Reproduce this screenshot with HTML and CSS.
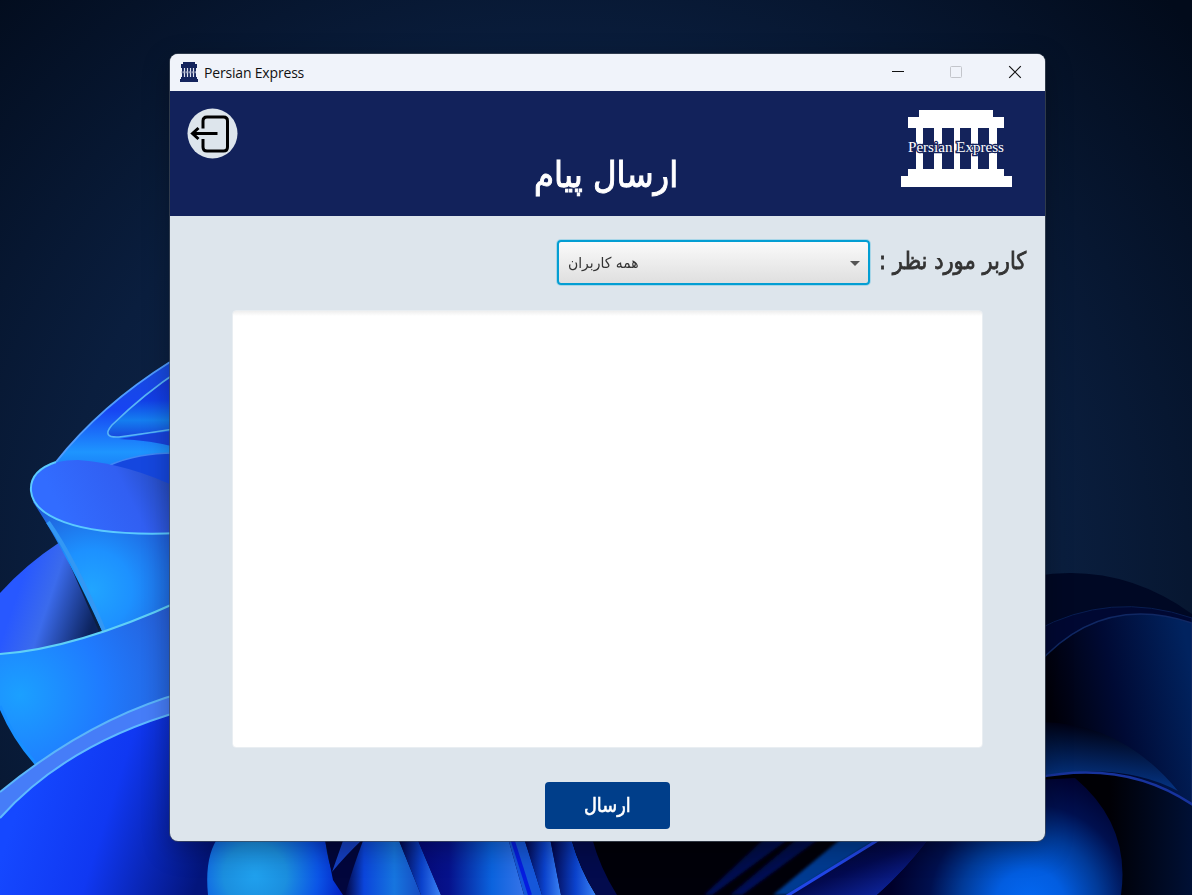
FILE: index.html
```
<!DOCTYPE html>
<html lang="fa">
<head>
<meta charset="utf-8">
<title>Persian Express</title>
<link rel="stylesheet" href="styles.css">
</head>
<body class="desktop">
<svg class="wallpaper" viewBox="0 0 1192 895" aria-hidden="true">
  <defs>
    <filter id="soft" x="-20%" y="-20%" width="140%" height="140%"><feGaussianBlur stdDeviation="1.5"/></filter>
    <radialGradient id="sky" gradientUnits="userSpaceOnUse" cx="560" cy="580" r="840"><stop offset="0" stop-color="#15305a"/><stop offset=".6" stop-color="#0a1e3e"/><stop offset="1" stop-color="#020b1b"/></radialGradient>
    <linearGradient id="top" x1="0" y1="0" x2="0" y2="1"><stop offset="0" stop-color="#174bdc"/><stop offset=".3" stop-color="#1744f2"/><stop offset=".57" stop-color="#1e95ff"/><stop offset=".8" stop-color="#1462ed"/></linearGradient>
    <linearGradient id="inner" x1="0" y1="0" x2="0" y2="1"><stop offset="0" stop-color="#1534d2"/><stop offset=".45" stop-color="#123fe8"/><stop offset=".75" stop-color="#147ef0"/><stop offset="1" stop-color="#1748dd"/></linearGradient>
    <linearGradient id="disc" x1=".2" y1=".7" x2="1" y2=".5"><stop offset="0" stop-color="#326cff"/><stop offset=".6" stop-color="#315ff2"/><stop offset="1" stop-color="#264abd"/></linearGradient>
    <radialGradient id="cone" gradientUnits="userSpaceOnUse" cx="92" cy="590" r="100"><stop offset="0" stop-color="#21a5ff"/><stop offset=".4" stop-color="#1d91ff"/><stop offset="1" stop-color="#2058d5"/></radialGradient>
    <linearGradient id="petal" gradientUnits="userSpaceOnUse" x1="15" y1="600" x2="92" y2="626"><stop offset="0" stop-color="#2858ff"/><stop offset=".4" stop-color="#3b6bec"/><stop offset="1" stop-color="#0c235d"/></linearGradient>
    <radialGradient id="ribbon" gradientUnits="userSpaceOnUse" cx="20" cy="695" r="185"><stop offset="0" stop-color="#1ba0ff"/><stop offset=".45" stop-color="#1f7bff"/><stop offset="1" stop-color="#2859cf"/></radialGradient>
    <linearGradient id="bowl" gradientUnits="userSpaceOnUse" x1="20" y1="800" x2="205" y2="860"><stop offset="0" stop-color="#1548ff"/><stop offset=".45" stop-color="#1038f2"/><stop offset="1" stop-color="#03157c"/></linearGradient>
    <radialGradient id="drop" gradientUnits="userSpaceOnUse" cx="255" cy="875" r="90"><stop offset="0" stop-color="#20a1ee"/><stop offset=".35" stop-color="#1b8fdf"/><stop offset=".7" stop-color="#0b55e7"/><stop offset="1" stop-color="#0321c4"/></radialGradient>
    <linearGradient id="fold"><stop offset="0" stop-color="#020641"/><stop offset=".25" stop-color="#0b45db"/><stop offset=".65" stop-color="#1675df"/><stop offset="1" stop-color="#164cc3"/></linearGradient>
    <linearGradient id="fold2"><stop offset="0" stop-color="#050878"/><stop offset=".3" stop-color="#06128c"/><stop offset=".7" stop-color="#0b63de"/><stop offset="1" stop-color="#3673e8"/></linearGradient>
    <linearGradient id="strip"><stop offset="0" stop-color="#020345"/><stop offset=".55" stop-color="#0b42cc"/><stop offset="1" stop-color="#3b83f5"/></linearGradient>
    <linearGradient id="dark" gradientUnits="userSpaceOnUse" x1="1050" y1="700" x2="1192" y2="670"><stop offset="0" stop-color="#00010a"/><stop offset=".45" stop-color="#000a34"/><stop offset="1" stop-color="#01235f"/></linearGradient>
    <linearGradient id="arch" gradientUnits="userSpaceOnUse" x1="1060" y1="722" x2="1055" y2="775"><stop offset="0" stop-color="#000112"/><stop offset="1" stop-color="#04307b"/></linearGradient>
    <linearGradient id="hollow" gradientUnits="userSpaceOnUse" x1="1110" y1="0" x2="1192" y2="0"><stop offset="0" stop-color="#000005"/><stop offset="1" stop-color="#001035"/></linearGradient>
    <radialGradient id="glow" gradientUnits="userSpaceOnUse" cx="1030" cy="905" r="140"><stop offset="0" stop-color="#0369f4"/><stop offset=".25" stop-color="#025de0"/><stop offset=".5" stop-color="#013a98"/><stop offset=".72" stop-color="#00104f"/><stop offset="1" stop-color="#00002a"/></radialGradient>
    <linearGradient id="ray" x1="0" y1="0" x2="1" y2="1"><stop offset="0" stop-color="#010318"/><stop offset=".5" stop-color="#030a50"/><stop offset="1" stop-color="#1230c0"/></linearGradient>
  </defs>
  <rect width="1192" height="895" fill="url(#sky)"/>
  <path d="M56 462Q100 406 170 362H230V520H56Z" fill="url(#top)"/>
  <path d="M56 462Q100 406 170 362" fill="none" stroke="#4f9cff" stroke-width="2"/>
  <path d="M180 370Q145 393 112 425Q101 438 119 437Q150 433 180 428Z" fill="url(#inner)"/>
  <path d="M180 370Q145 393 112 425Q101 438 119 437Q150 433 180 428" fill="none" stroke="#58b5f6" stroke-width="1.6"/>
  <path d="M119 439Q150 433 180 430V448Q150 440 119 439Z" fill="#1742dc"/>
  <path d="M110 465Q140 452 180 453V490Z" fill="#1547df"/>
  <path d="M110 465Q140 452 180 453" fill="none" stroke="#3f88f5" stroke-width="1.6"/>
  <path d="M60 542Q25 565 0 593V680H120Z" fill="url(#petal)"/>
  <path d="M33 502Q65 550 103 633H180V520Z" fill="url(#cone)"/>
  <path d="M48 522Q75 560 105 633" fill="none" stroke="#3398f4" stroke-width="4"/>
  <path d="M180 489Q130 464 78 460C46 460 30 474 31 491C33 513 68 538 180 533Z" fill="url(#disc)"/>
  <path d="M56 462C38 468 30 478 31 491C33 513 68 538 180 533" fill="none" stroke="#5bcaff" stroke-width="2"/>
  <path d="M0 654Q75 649 180 601V780L37 765Q13 738 0 706Z" fill="url(#ribbon)"/>
  <path d="M0 654Q75 649 180 601" fill="none" stroke="#5fd0f7" stroke-width="2"/>
  <path d="M0 706Q13 738 37 765" fill="none" stroke="#188fff" stroke-width="3"/>
  <path d="M0 792Q90 718 185 692V895H0Z" fill="#467df8"/>
  <path d="M0 792Q90 718 185 692" fill="none" stroke="#5bb6fa" stroke-width="2"/>
  <path d="M0 818Q67 743 185 710L250 835V895H0Z" fill="url(#bowl)"/>
  <path d="M0 818Q67 743 185 710" fill="none" stroke="#5fbaff" stroke-width="2"/>
  <path d="M220 835Q204 855 208 895H344Q327 870 325 835Z" fill="url(#drop)"/>
  <path d="M324 835L333 880L343 895H570L560 835Z" fill="#02063d"/>
  <path d="M345 835L332 872Q345 856 364 838Z" fill="#153fc1"/>
  <path d="M364 838Q352 870 345 895H421L398 838Z" fill="url(#fold)"/>
  <path d="M398 838L421 895H441L417 838Z" fill="url(#strip)"/>
  <path d="M417 838L441 895H524L508 838Z" fill="url(#fold2)"/>
  <path d="M508 838L524 895H542L524 838Z" fill="#1557da"/>
  <path d="M512 838L530 895" stroke="#061de0" stroke-width="4"/>
  <path d="M524 838L542 895H561L550 838Z" fill="url(#strip)"/>
  <path d="M550 838L561 895H596Q580 870 571 838Z" fill="url(#strip)"/>
  <path d="M571 838Q580 870 596 895H1192V760H1045V838Z" fill="#000009"/>
  <path d="M571 838Q580 870 596 895H617Q600 868 592 838Z" fill="#030b4d"/>
  <g filter="url(#soft)">
    <path d="M765 838L704 895H712L790 838Z" fill="url(#ray)"/>
    <path d="M798 838L730 895H742L820 838Z" fill="url(#ray)"/>
    <path d="M842 838L773 895H789L880 838Z" fill="#063b91"/>
  </g>
  <path d="M878 840L789 895H877Q900 876 930 838Z" fill="url(#ray)"/>
  <path d="M878 840L782 899" stroke="#2146e7" stroke-width="3"/>
  <path d="M1035 576Q1120 562 1192 614V895H1035Z" fill="#000824"/>
  <path d="M1035 631Q1110 590 1192 618V895H1035Z" fill="#000832" stroke="#081d50" stroke-width="1"/>
  <path d="M1035 667Q1100 592 1192 623V895H1035Z" fill="url(#dark)" stroke="#102863" stroke-width="1.5"/>
  <path d="M1035 722Q1120 720 1178 791Q1120 760 1035 778Z" fill="url(#arch)"/>
  <path d="M1035 778Q1130 758 1200 810V900H1035Z" fill="url(#hollow)"/>
  <path d="M1035 778Q1130 758 1200 810" fill="none" stroke="#17339d" stroke-width="2.5"/>
  <path d="M930 838Q905 870 877 895H1121Q1131 825 1075 778L1035 780V838Z" fill="url(#glow)"/>
</svg>

<main class="window">
  <div class="titlebar">
    <svg class="app-icon" viewBox="0 0 18 20"><path fill="#14245d" d="M3 0h12v2h2v4h-1v9h1v2h1v3H0v-3h1v-2h1V6H1V2h2z"/><path d="M4.500 6v9M7.500 6v9M10.500 6v9M13.500 6v9" stroke="#dfe3ef" stroke-width="1.2"/><path d="M1.500 10.300h15" stroke="#9098b5" stroke-width="2" stroke-dasharray="1 .5"/></svg>
    <span class="window-title">Persian Express</span>
    <div class="controls">
      <svg viewBox="0 0 14 14"><path d="M1 6.500h12" stroke="#111"/></svg>
      <svg viewBox="0 0 14 14"><rect x="1.500" y="1.500" width="11" height="11" rx="1" fill="none" stroke="#c3c5cb"/></svg>
      <svg viewBox="0 0 14 14"><path d="M1.200 1.200l11.600 11.600M12.800 1.200L1.200 12.800" stroke="#111" stroke-width="1.2"/></svg>
    </div>
  </div>
  <header class="header">
    <button class="exit" aria-label="خروج"><svg viewBox="0 0 51 51"><circle cx="25.500" cy="24.500" r="25" fill="#dde5ec"/><path d="M16 19.500v-7.500q0-4 4-4h16.500q4 0 4 4v26q0 4-4 4h-16.500q-4 0-4-4v-8M30.500 24.500H5.500M11.500 19l-6 5.500 6 5.500" fill="none" stroke="#000" stroke-width="3"/></svg></button>
    <h1 class="heading"><span>ارسال پیام</span></h1>
    <svg class="logo" viewBox="0 0 111 77"><path fill="#fff" d="M18 0h74v7h11v11h-7v41h7v7h8v11H0V66h7v-7h8V18H7V7h11z"/><path fill="#14235b" d="M22 18h11v41H22zM41 18h12v41H41zM59 18h11v41H59zM77 18h11v41H77z"/><text class="logo-text" x="7" y="42" textLength="96" lengthAdjust="spacingAndGlyphs">Persian Express</text></svg>
  </header>
  <section class="form">
    <div class="user-row" dir="rtl">
      <span class="label"><span>کاربر مورد نظر :</span></span>
      <div class="select" dir="ltr"><span class="value">همه کاربران</span><span class="arrow"></span></div>
    </div>
    <div class="message"></div>
    <button class="send"><span>ارسال</span></button>
  </section>
</main>
</body>
</html>
```
FILE: styles.css
```
* { box-sizing: border-box; }
.desktop { margin: 0; width: 1192px; height: 895px; overflow: hidden; padding: 54px 0 0 170px; background: #07162e; font-family: "DejaVu Sans", sans-serif; }
.wallpaper { position: absolute; inset: 0; width: 1192px; height: 895px; z-index: -1; }
.window { width: 875px; height: 787px; border-radius: 8px; overflow: hidden; background: #dde5ec; box-shadow: 0 0 0 1px rgba(65, 75, 90, .7), 0 8px 28px rgba(0, 0, 0, .3); }
.titlebar { height: 37px; display: flex; align-items: center; background: #f0f3fa; padding: 0 23px 1px 10px; }
.app-icon { width: 18px; height: 20px; }
.window-title { margin-left: 6px; font: 14px/20px "Open Sans", sans-serif; letter-spacing: -.18px; color: #111; padding-top: 1px; }
.controls { margin-left: auto; display: flex; gap: 45px; }
.controls svg { width: 14px; height: 14px; }
.controls svg:first-child { margin-right: -1px; }
.header { height: 125px; background: #12225b; display: grid; grid-template-columns: 51px 1fr 111px; padding: 18px 33px 0 17px; }
.exit { width: 51px; height: 51px; padding: 0; border: 0; background: none; }
.exit svg { display: block; width: 51px; height: 51px; overflow: visible; }
.heading { margin: 42px 0 0 74px; text-align: center; color: #fff; font-size: 36px; font-weight: 400; line-height: 48px; -webkit-text-stroke: 1px #fff; }
.heading span, .label span, .value, .send span { display: inline-block; white-space: nowrap; }
.heading span { transform: scaleX(.9); }
.logo { width: 111px; height: 77px; margin-top: 1px; }
.logo-text { font: 14px "Liberation Serif", serif; fill: #fff; stroke: #14235b; stroke-width: 2.4px; paint-order: stroke; }
.form { display: flex; flex-direction: column; align-items: center; padding-top: 24px; }
.user-row { align-self: stretch; display: flex; gap: 9px; height: 46px; padding-right: 19px; }
.label { width: 147px; font-size: 24px; line-height: 43px; color: #333; -webkit-text-stroke: .8px #333; }
.label span { transform: scaleX(.875); transform-origin: right; }
.select { width: 313px; height: 45px; border: 2px solid #039ed3; border-radius: 4px; background: linear-gradient(#fafafa, #dfdfdf); box-shadow: 0 0 0 1px #a8d6e8; display: flex; align-items: center; justify-content: space-between; padding: 1px 8px 0 9px; color: #333; font-size: 15px; }
.value { transform: scaleX(.93); transform-origin: left; }
.arrow { border: 5px solid transparent; border-top-color: #555; border-bottom: 0; }
.message { width: 751px; height: 438px; margin-top: 24px; border: 1px solid #e9eef2; border-radius: 4px; background: linear-gradient(#eee, #fff 5px); }
.send { width: 125px; height: 47px; margin-top: 34px; padding: 0 0 1px; border: 0; border-radius: 4px; background: #003e8a; color: #fff; font: 20px "DejaVu Sans", sans-serif; }
.send span { transform: scaleX(.89); -webkit-text-stroke: .6px #fff; }
```
